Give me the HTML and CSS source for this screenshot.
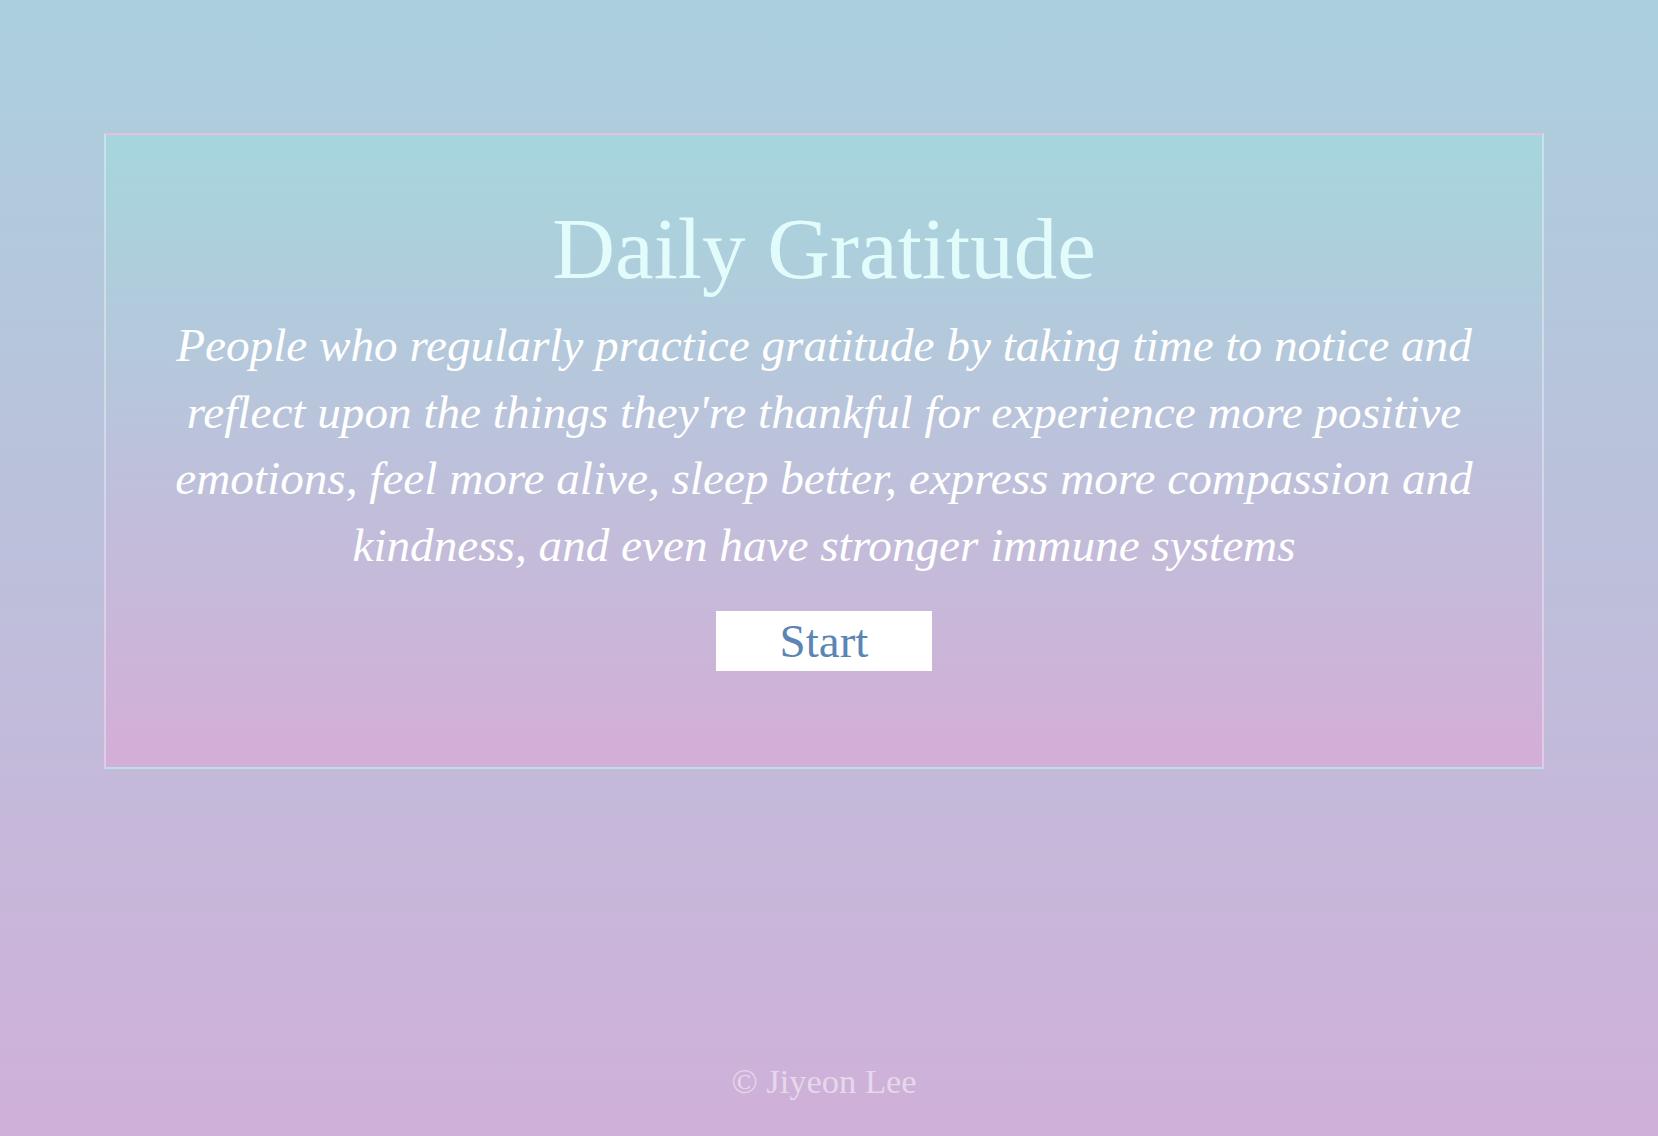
FILE: index.html
```html
<!DOCTYPE html>
<html lang="en">
<head>
<meta charset="utf-8">
<title>Daily Gratitude</title>
<link rel="stylesheet" href="styles.css">
</head>
<body>
<div class="page">
  <main class="card">
    <h1 class="title">Daily Gratitude</h1>
    <p class="quote">People who regularly practice gratitude by taking time to notice and<br>
      reflect upon the things they're thankful for experience more positive<br>
      emotions, feel more alive, sleep better, express more compassion and<br>
      kindness, and even have stronger immune systems</p>
    <button class="start">Start</button>
  </main>
  <footer class="footer">© Jiyeon Lee</footer>
</div>
</body>
</html>
```

FILE: styles.css
```css
html, body {
  margin: 0;
  padding: 0;
  height: 100%;
}
body {
  background: linear-gradient(to bottom, #abd0dd 0%, #bdbfdb 50%, #d0b0d8 100%);
  font-family: "Liberation Serif", "Times New Roman", serif;
}
.page {
  min-height: 100vh;
  box-sizing: border-box;
  display: flex;
  flex-direction: column;
  align-items: stretch;
  padding: 133px 114px 35px 104px;
}
.card {
  box-sizing: border-box;
  width: 1440px;
  height: 636px;
  border-style: solid;
  border-width: 2px;
  border-color: #e6bfe0 rgba(255,255,255,0.35) #b4e4e6 rgba(255,255,255,0.35);
  background: linear-gradient(to bottom, #a5d6dd 0%, #bcc2db 50%, #d4aed6 100%);
  padding: 66px 30px 0;
  display: flex;
  flex-direction: column;
  align-items: center;
}
.title {
  margin: 0;
  font-weight: 400;
  font-size: 87px;
  line-height: 96px;
  color: #e2fcfb;
}
.quote {
  margin: 15px 0 0;
  font-style: italic;
  font-size: 47.2px;
  line-height: 66.6px;
  color: #ffffff;
  text-align: center;
  white-space: nowrap;
}
.start {
  margin-top: 33px;
  width: 216px;
  height: 60px;
  border: none;
  background: #ffffff;
  color: #5a85b5;
  font-family: "Liberation Serif", "Times New Roman", serif;
  font-size: 47px;
  line-height: 60px;
  padding: 0;
  cursor: pointer;
}
.footer {
  margin-top: auto;
  text-align: center;
  font-size: 34.5px;
  line-height: 40px;
  color: rgba(255,255,255,0.5);
}
```
